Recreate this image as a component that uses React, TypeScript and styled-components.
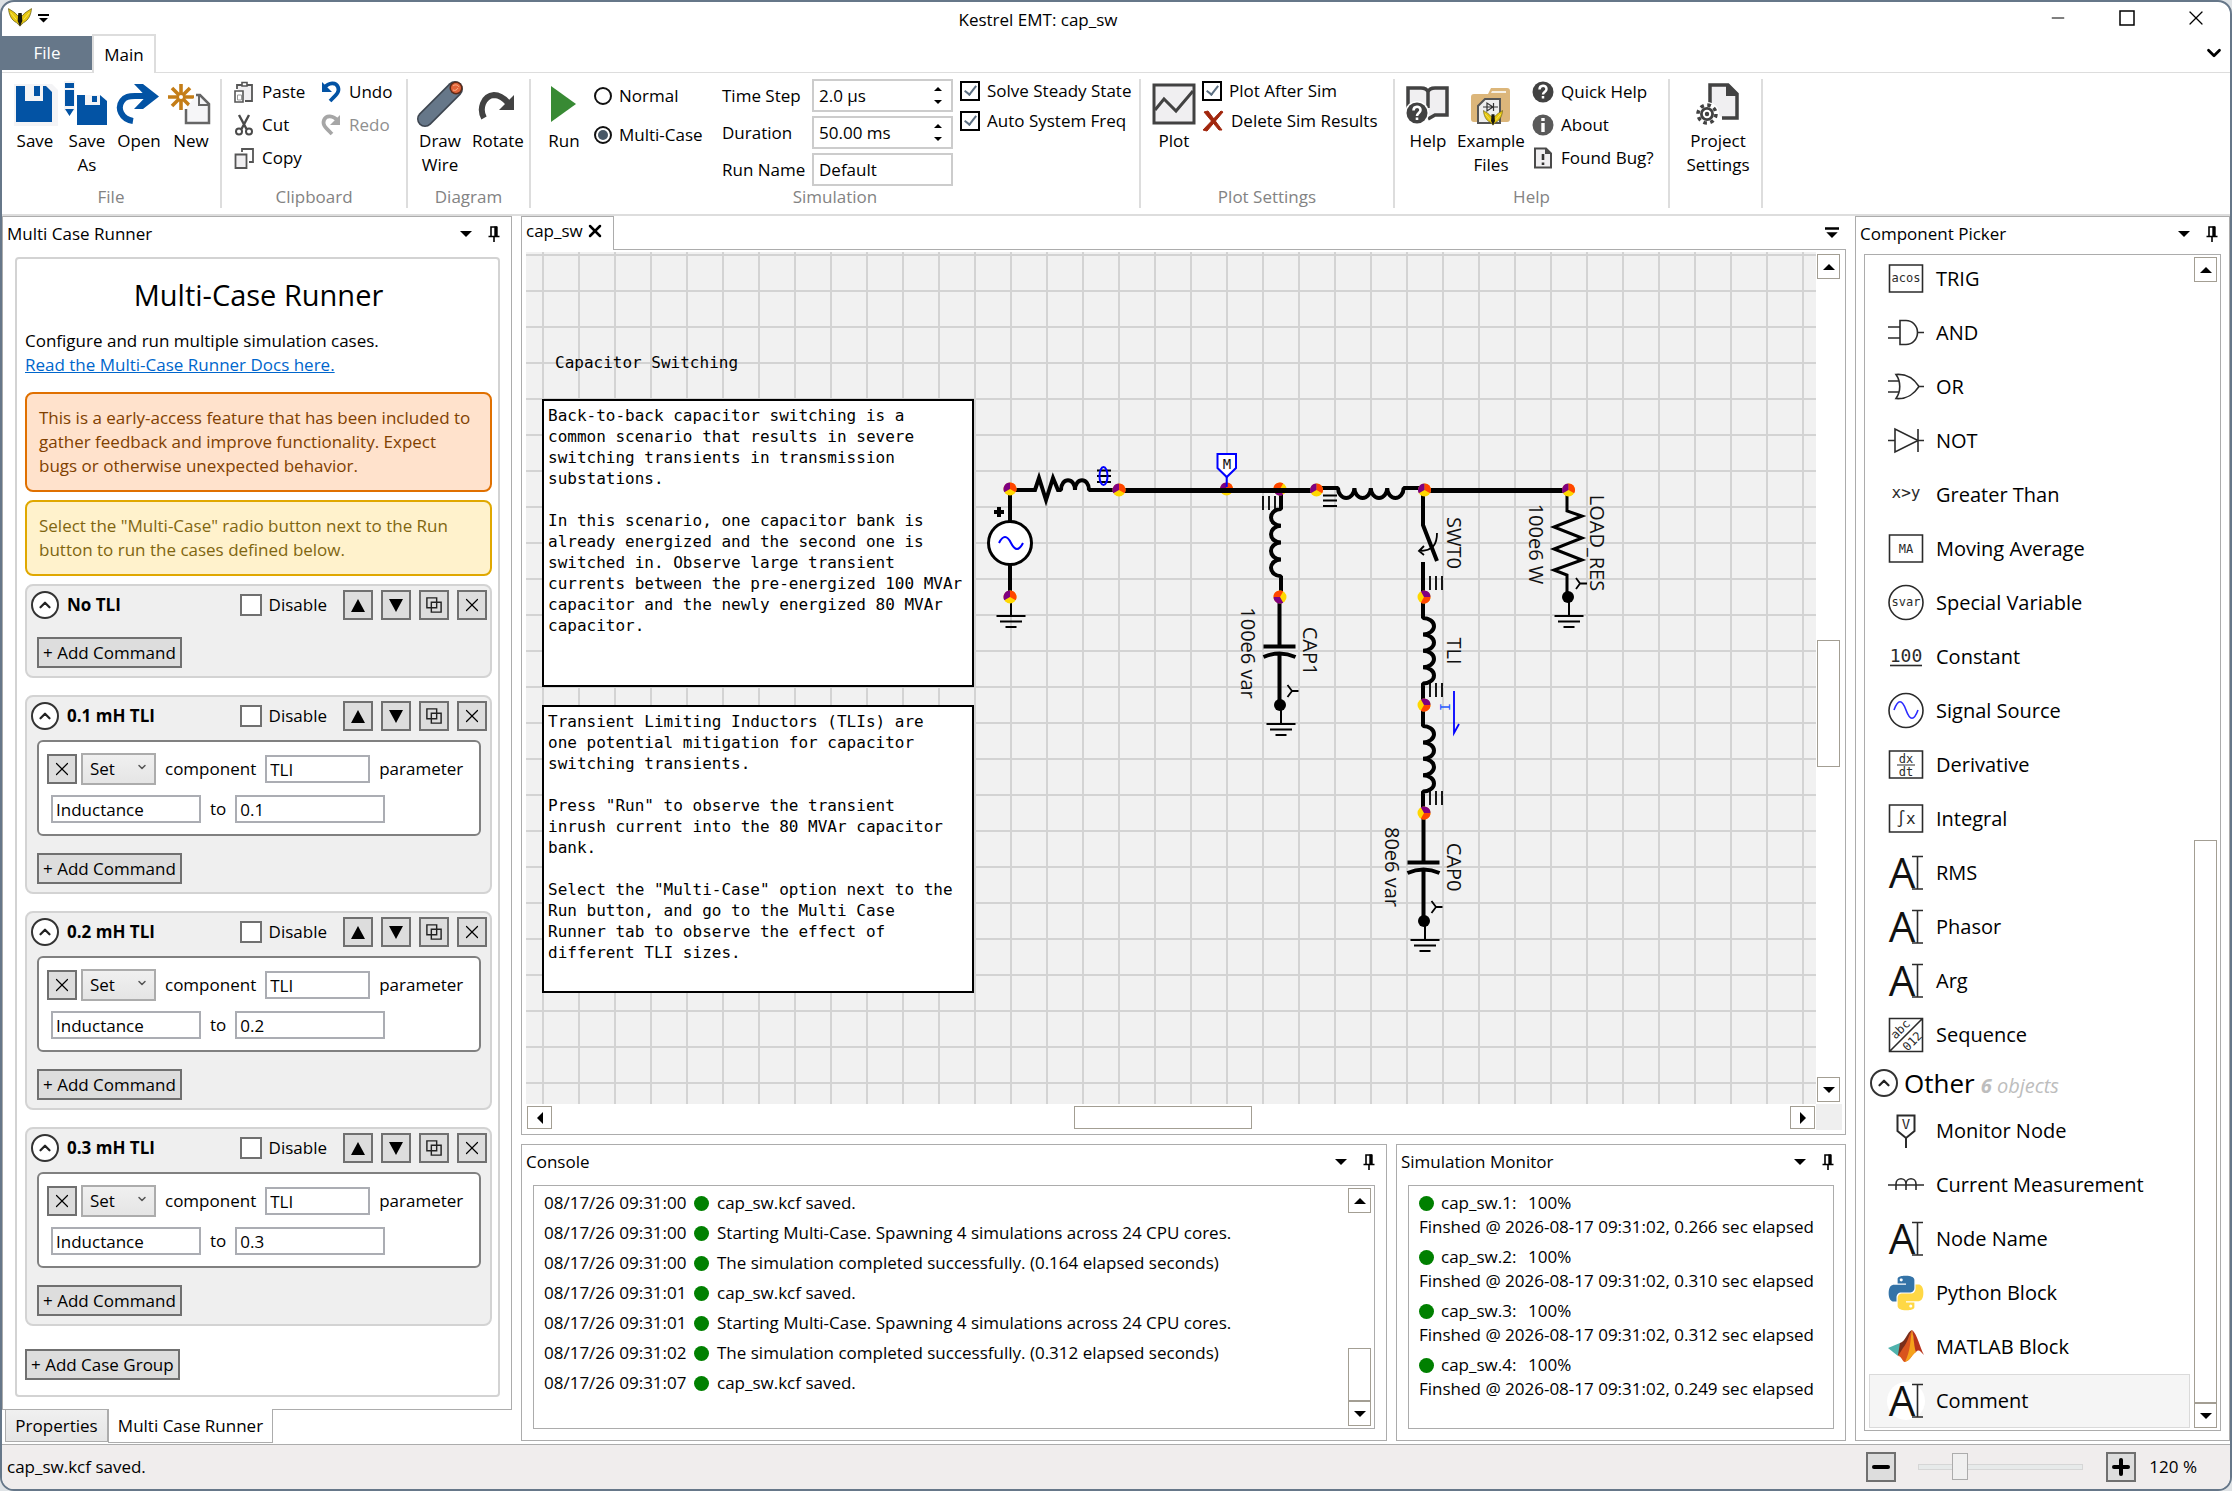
import React from "react";
import styled, { createGlobalStyle, css } from "styled-components";
import { ChevronDown, ChevronUp, Minus, Plus, X } from "lucide-react";

const ui = '"Open Sans", "Noto Sans", sans-serif';
const mono = '"DejaVu Sans Mono", "Liberation Mono", monospace';
const slate = "#667789";
const edge = "#acacac";

const Global = createGlobalStyle`
  * { box-sizing: border-box; }
  body { margin: 0; background: #dfe3e6; font: 17px/24px ${ui}; color: #000; }
  button, input, select { font: inherit; color: inherit; margin: 0; padding: 0; }
  svg { display: block; flex: none; }
  h1, h2, p, ul { margin: 0; padding: 0; font-weight: 400; list-style: none; }
`;

/* ---------- window frame ---------- */

const Window = styled.div`
  height: 100vh;
  display: flex;
  flex-direction: column;
  background: #fff;
  border: 2px solid ${slate};
  border-radius: 14px;
  overflow: hidden;
`;
const TitleBar = styled.header`
  height: 32px;
  display: grid;
  grid-template-columns: 300px 1fr 300px;
  align-items: center;
`;
const QuickAccess = styled.div`
  display: flex;
  align-items: center;
  gap: 5px;
  padding-left: 6px;
`;
const WindowTitle = styled.h1`
  font-size: 17px;
  text-align: center;
  padding: 3px 156px 0 0;
`;
const Caption = styled.div`
  display: flex;
  justify-content: flex-end;
  gap: 23px;
  padding-right: 11px;
`;
const IconButton = styled.button<{ $w?: number }>`
  width: ${(p) => p.$w ?? 24}px;
  height: 24px;
  border: 0;
  background: none;
  display: flex;
  align-items: center;
  justify-content: center;
`;
const TabRow = styled.nav`
  height: 39px;
  display: flex;
  align-items: flex-end;
  border-bottom: 1px solid #ddd;
  padding-right: 4px;
  ${IconButton} {
    align-self: center;
  }
`;
const FileTab = styled.button`
  width: 90px;
  height: 34px;
  margin-bottom: 2px;
  border: 0;
  background: ${slate};
  color: #fff;
`;
const MainTab = styled.button`
  width: 64px;
  height: 39px;
  margin-bottom: -1px;
  border: 2px solid #ddd;
  border-bottom: 0;
  background: #fff;
`;
const Spacer = styled.span`
  flex: 1;
`;

/* ---------- ribbon ---------- */

const Ribbon = styled.div`
  display: flex;
  padding: 6px 0;
  border-bottom: 2px solid #ddd;
`;
const Group = styled.section<{ $w: number; $pad: number }>`
  width: ${(p) => p.$w}px;
  height: 129px;
  display: flex;
  flex-direction: column;
  border-right: 2px solid #ddd;
  & > div {
    flex: 1;
    min-height: 0;
    padding-left: ${(p) => p.$pad}px;
  }
`;
const GroupBody = styled.div`
  display: flex;
  align-items: flex-start;
`;
const GroupName = styled.h2`
  font-size: 17px;
  line-height: 22px;
  color: #838383;
  text-align: center;
`;
const BigButton = styled.button<{ $w?: number }>`
  width: ${(p) => p.$w ?? 52}px;
  display: flex;
  flex-direction: column;
  align-items: center;
  gap: 2px;
  padding-top: 2px;
  border: 0;
  background: none;
`;
const SmallGrid = styled.div<{ $cols?: string }>`
  display: grid;
  grid-template-columns: ${(p) => p.$cols ?? "auto"};
  grid-auto-rows: 26px;
  gap: 7px 0;
  margin-left: 4px;
`;
const SmallButton = styled.button<{ $muted?: boolean }>`
  display: flex;
  align-items: center;
  gap: 7px;
  border: 0;
  background: none;
  white-space: nowrap;
  color: ${(p) => (p.$muted ? "#8f8f8f" : "#000")};
`;
const RadioList = styled.div`
  width: 132px;
  padding: 4px 0 0 4px;
  display: grid;
  grid-auto-rows: 26px;
  row-gap: 13px;
`;
const Choice = styled.label`
  display: flex;
  align-items: center;
  gap: 7px;
  white-space: nowrap;
`;
const Radio = styled.input.attrs({ type: "radio" })`
  appearance: none;
  width: 18px;
  height: 18px;
  border: 2px solid #111;
  border-radius: 50%;
  display: grid;
  place-items: center;
  &:checked::after {
    content: "";
    width: 10px;
    height: 10px;
    border-radius: 50%;
    background: #475766;
  }
`;
const Check = styled.input.attrs({ type: "checkbox" })<{ $soft?: boolean }>`
  appearance: none;
  flex: none;
  width: ${(p) => (p.$soft ? 22 : 20)}px;
  height: ${(p) => (p.$soft ? 22 : 20)}px;
  background: #fff;
  border: 2px solid ${(p) => (p.$soft ? "#707070" : "#000")};
  display: grid;
  place-items: center;
  &:checked::after {
    content: "";
    width: 5px;
    height: 10px;
    margin-bottom: 3px;
    border: solid #5c6f82;
    border-width: 0 2px 2px 0;
    transform: rotate(38deg);
  }
`;
const Fields = styled.div`
  display: grid;
  grid-template-columns: 90px 141px;
  grid-auto-rows: 33px;
  row-gap: 4px;
  align-items: center;
`;
const FieldBox = styled.div`
  height: 33px;
  display: flex;
  align-items: center;
  border: 2px solid #ccc;
  background: #fff;
  padding-left: 5px;
`;
const FieldInput = styled.input`
  flex: 1;
  min-width: 0;
  height: 27px;
  border: 0;
  outline: 0;
  background: none;
`;
const Spinner = styled.div`
  width: 26px;
  display: grid;
  button {
    border: 0;
    background: none;
    height: 13px;
    display: grid;
    place-items: center;
  }
`;
const CheckList = styled.div<{ $left: number }>`
  margin-left: ${(p) => p.$left}px;
  display: grid;
  grid-auto-rows: 23px;
  row-gap: 7px;
`;

/* ---------- docking layout ---------- */

const Workspace = styled.main`
  flex: 1;
  min-height: 0;
  display: grid;
  grid-template-columns: 510px minmax(0, 1fr) 375px;
  grid-template-rows: minmax(0, 1fr);
  column-gap: 9px;
`;
const Column = styled.div<{ $bottom?: number }>`
  min-height: 0;
  display: flex;
  flex-direction: column;
  padding-bottom: ${(p) => p.$bottom ?? 0}px;
`;
const Panel = styled.section`
  flex: 1;
  min-width: 0;
  min-height: 0;
  display: flex;
  flex-direction: column;
  border: 1px solid ${edge};
  background: #fff;
`;
const PanelHead = styled.div`
  height: 36px;
  flex: none;
  display: flex;
  align-items: center;
  padding: 0 3px 2px 4px;
  h2 {
    flex: 1;
    font-size: 17px;
  }
`;
const PanelBody = styled.div<{ $pad: string }>`
  flex: 1;
  min-height: 0;
  display: flex;
  padding: ${(p) => p.$pad};
`;
const Well = styled.div<{ $pad?: string }>`
  flex: 1;
  min-width: 0;
  display: flex;
  overflow: hidden;
  border: 1px solid ${edge};
  padding: ${(p) => p.$pad ?? 0};
`;
const BottomRow = styled.div`
  height: 297px;
  flex: none;
  margin-top: 9px;
  display: grid;
  grid-template-columns: minmax(0, 1fr) 450px;
  column-gap: 9px;
`;

/* ---------- scroll bars ---------- */

const Bar = styled.div<{ $across?: boolean }>`
  flex: none;
  display: flex;
  flex-direction: ${(p) => (p.$across ? "row" : "column")};
  align-items: stretch;
  ${(p) =>
    p.$across
      ? css`
          height: 23px;
          margin: 2px 1px;
        `
      : css`
          width: 23px;
          margin: 2px 1px;
        `}
`;
const BarButton = styled.button`
  width: 23px;
  height: 25px;
  flex: none;
  border: 1px solid #a39e93;
  background: #fff;
  display: grid;
  place-items: center;
`;
const BarButtonWide = styled(BarButton)`
  width: 25px;
  height: 23px;
`;
const Gap = styled.span<{ $n: number }>`
  flex: ${(p) => p.$n} 0 0;
`;
const Thumb = styled.span<{ $n: number }>`
  flex: ${(p) => p.$n} 0 0;
  border: 1px solid #a39e93;
  background: #fff;
`;

/* ---------- multi case runner ---------- */

const Runner = styled.div`
  flex: 1;
  display: flex;
  flex-direction: column;
  border: 2px solid #d3d3d3;
  border-radius: 4px;
  padding: 16px 6px 0 8px;
  overflow: hidden;
`;
const RunnerTitle = styled.h2`
  font-size: 29px;
  line-height: 40px;
  text-align: center;
  margin-bottom: 14px;
`;
const DocsLink = styled.a`
  color: #0066cc;
  align-self: flex-start;
`;
const Notice = styled.p<{ $tone: "orange" | "yellow" }>`
  margin-top: 8px;
  padding: 12px;
  border-radius: 8px;
  border: 2px solid ${(p) => (p.$tone === "orange" ? "#e07000" : "#e0a800")};
  background: ${(p) => (p.$tone === "orange" ? "#ffe2cc" : "#fff2cc")};
  color: ${(p) => (p.$tone === "orange" ? "#804000" : "#7f6610")};
`;
const Intro = styled.div`
  display: flex;
  flex-direction: column;
  margin-bottom: 7px;
`;
const Cases = styled.div`
  display: grid;
  row-gap: 17px;
  margin: 8px 0 23px;
`;
const CaseBox = styled.section`
  border: 2px solid #d3d3d3;
  border-radius: 8px;
  background: #efefef;
  padding: 4px 3px 8px 4px;
`;
const CaseHead = styled.div`
  height: 30px;
  display: flex;
  align-items: center;
  gap: 8px;
  h3 {
    flex: 1;
    margin: 0;
    font-size: 17px;
    font-weight: 700;
  }
  label {
    margin-right: 8px;
  }
`;
const Round = styled.button`
  width: 28px;
  height: 28px;
  flex: none;
  border: 2px solid #333;
  border-radius: 50%;
  background: #fff;
  display: grid;
  place-items: center;
`;
const GrayButton = styled.button<{ $square?: boolean }>`
  height: ${(p) => (p.$square ? 30 : 31)}px;
  width: ${(p) => (p.$square ? "30px" : "auto")};
  flex: none;
  display: flex;
  align-items: center;
  justify-content: center;
  align-self: flex-start;
  padding: ${(p) => (p.$square ? "0" : "0 4px")};
  border: 2px solid #707070;
  background: #ddd;
  white-space: nowrap;
`;
const CaseFoot = styled.div`
  margin: 17px 0 0 6px;
  display: flex;
`;
const Command = styled.div`
  margin: 9px 6px 0 6px;
  padding: 11px 8px;
  border: 2px solid #808080;
  border-radius: 6px;
  background: #fff;
  display: grid;
  row-gap: 10px;
`;
const CommandRow = styled.div<{ $h: number; $indent?: number }>`
  height: ${(p) => p.$h}px;
  padding-left: ${(p) => p.$indent ?? 0}px;
  display: flex;
  align-items: center;
  gap: 9px;
  ${GrayButton} {
    align-self: center;
    margin-right: -5px;
  }
`;
const SelectWrap = styled.span`
  display: grid;
  width: 75px;
  align-items: center;
  & > * {
    grid-area: 1 / 1;
  }
  svg {
    justify-self: end;
    margin: 0 8px 4px 0;
    pointer-events: none;
  }
`;
const Select = styled.select`
  appearance: none;
  width: 75px;
  height: 32px;
  padding-left: 7px;
  border: 2px solid #acacac;
  border-radius: 0;
  background: linear-gradient(#f0f0f0, #e5e5e5);
`;
const TextBox = styled.input<{ $w: number }>`
  width: ${(p) => p.$w}px;
  height: 28px;
  padding: 0 3px;
  border: 2px solid #abadb3;
  background: #fff;
`;
const DockTabs = styled.nav`
  height: 34px;
  flex: none;
  display: flex;
  align-items: flex-start;
  padding-left: 3px;
`;
const DockTab = styled.button<{ $on?: boolean }>`
  width: ${(p) => (p.$on ? 165 : 103)}px;
  height: ${(p) => (p.$on ? 34 : 32)}px;
  border: 1px solid ${edge};
  border-top: 0;
  background: ${(p) => (p.$on ? "#fff" : "linear-gradient(#f0f0f0, #e5e5e5)")};
  margin-top: ${(p) => (p.$on ? -1 : 0)}px;
`;

/* ---------- document ---------- */

const DocTabs = styled.div`
  height: 34px;
  flex: none;
  display: flex;
  align-items: center;
  border-bottom: 1px solid ${edge};
  padding-right: 2px;
`;
const DocTab = styled.div`
  width: 93px;
  height: 34px;
  display: flex;
  align-items: center;
  padding-left: 4px;
  padding-bottom: 4px;
  border: 1px solid ${edge};
  border-bottom: 0;
  background: #fff;
`;
const DocBody = styled.div`
  flex: 1;
  min-height: 0;
  display: grid;
  grid-template: minmax(0, 1fr) 26px / minmax(0, 1fr) 26px;
  padding: 2px 3px 4px 4px;
  border: 1px solid ${edge};
  border-top: 0;
`;
const Corner = styled.span`
  background: #efefef;
`;
const Canvas = styled.div`
  position: relative;
  overflow: hidden;
  background-color: #f1f1f1;
  background-image: linear-gradient(90deg, #d3d3d3 2px, transparent 2px),
    linear-gradient(#d3d3d3 2px, transparent 2px);
  background-size: 36px 36px;
  background-position: 16px 2px;
`;
const Schematic = styled.svg`
  position: absolute;
  left: 0;
  top: 0;
  width: 100%;
  height: 100%;
`;
const Note = styled.p<{ $x: number; $y: number; $boxed?: boolean }>`
  position: absolute;
  left: ${(p) => p.$x}px;
  top: ${(p) => p.$y}px;
  font: 16px/21px ${mono};
  white-space: pre;
  ${(p) =>
    p.$boxed &&
    css`
      width: 432px;
      height: 288px;
      padding: 4px;
      border: 2px solid #000;
      background: #fff;
    `}
`;

/* ---------- console, monitor, picker ---------- */

const Log = styled.ul`
  flex: 1;
  padding: 2px 0 0 10px;
`;
const LogRow = styled.li`
  height: 30px;
  display: grid;
  grid-template-columns: 150px 23px 1fr;
  align-items: center;
`;
const Dot = styled.span`
  width: 15px;
  height: 15px;
  border-radius: 50%;
  background: #008000;
`;
const Runs = styled.ul`
  display: grid;
  align-content: start;
  row-gap: 6px;
  padding: 5px 0 0 10px;
  white-space: nowrap;
`;
const RunHead = styled.div`
  display: flex;
  align-items: center;
  span:nth-child(2) {
    width: 87px;
    margin-left: 7px;
  }
`;
const Items = styled.div`
  flex: 1;
  min-width: 0;
  display: flex;
  flex-direction: column;
  justify-content: flex-end;
  padding: 0 3px 2px 4px;
`;
const Item = styled.button<{ $on?: boolean }>`
  height: 54px;
  flex: none;
  display: flex;
  align-items: center;
  gap: 11px;
  padding-left: 17px;
  font-size: 20px;
  border: 1px solid ${(p) => (p.$on ? "#dadada" : "transparent")};
  background: ${(p) => (p.$on ? "#f5f5f5" : "none")};
  svg {
    border-radius: 50%;
    background: ${(p) => (p.$on ? "#fff" : "none")};
    overflow: visible;
  }
`;
const Section = styled.div`
  height: 42px;
  flex: none;
  display: flex;
  align-items: center;
  gap: 6px;
  padding-left: 1px;
  font-size: 26px;
  em {
    font-size: 20px;
    font-style: italic;
    color: #bdbdbd;
    padding-top: 6px;
  }
`;
const StatusBar = styled.footer`
  height: 45px;
  flex: none;
  display: flex;
  align-items: center;
  border-top: 1px solid ${edge};
  background: #f0eded;
  padding: 0 33px 0 5px;
  ${GrayButton} {
    align-self: center;
  }
`;
const Zoom = styled.input.attrs({ type: "range" })`
  appearance: none;
  width: 165px;
  height: 28px;
  margin: 0 23px 0 22px;
  background: none;
  &::-webkit-slider-runnable-track {
    height: 6px;
    border: 1px solid #d6d6d6;
    background: #e7eaea;
  }
  &::-webkit-slider-thumb {
    appearance: none;
    width: 16px;
    height: 27px;
    margin-top: -12px;
    border: 1px solid #acacac;
    background: #f0f0f0;
  }
`;
const Percent = styled.output`
  margin-left: 13px;
`;

/* ---------- glyphs ---------- */

const Tri = ({ dir, w = 12 }: { dir: "up" | "down" | "left" | "right"; w?: number }) => {
  const d = { up: "M0 9L6 3l6 6z", down: "M0 3l6 6 6-6z", left: "M9 0L3 6l6 6z", right: "M3 0l6 6-6 6z" }[dir];
  return (
    <svg width={w} height={w} viewBox="0 0 12 12">
      <path d={d} />
    </svg>
  );
};
const TallTri = ({ down }: { down?: boolean }) => (
  <svg width="16" height="16" viewBox="0 0 16 16">
    <path d={down ? "M1 2h14L8 15z" : "M1 15h14L8 2z"} />
  </svg>
);
const Pin = () => (
  <svg width="14" height="18" viewBox="0 0 14 18" fill="none" stroke="#000">
    <path d="M4 11V2h6" strokeWidth="1.6" />
    <path d="M9 1.5V11" strokeWidth="3.4" />
    <path d="M1.5 11.5h11M7 12v5" strokeWidth="1.6" />
  </svg>
);
const MenuBars = ({ w = 11 }: { w?: number }) => (
  <svg width={w} height={w} viewBox="0 0 11 11">
    <path d="M0 1h11v2H0zM1 5h9l-4.500 4.500z" />
  </svg>
);
const Bird = ({ x = 0, y = 0, size = 24 }: { x?: number; y?: number; size?: number }) => (
  <svg x={x} y={y} width={size} height={size * 0.8} viewBox="0 0 24 19">
    <path d="M.5.5C1 6 3 12 8.500 14.500L12 18l3.500-3.500C21 12 23 6 23.500.5 20 3 17 4 14.500 7.500H9.500C7 4 4 3 .5.5z" fill="#e6c60f" stroke="#6d6420" strokeWidth=".8" />
    <path d="M2.500 4.500l6 7M21.500 4.500l-6 7" stroke="#f9e85c" />
    <path d="M10.300 5h3.400l.6 8L12 18.500 9.700 13z" fill="#17170e" />
  </svg>
);
const Big = ({ children }: { children: React.ReactNode }) => (
  <svg width="46" height="46" viewBox="0 0 46 46" fill="none">
    {children}
  </svg>
);
const Small = ({ children }: { children: React.ReactNode }) => (
  <svg width="22" height="22" viewBox="0 0 22 22" fill="none">
    {children}
  </svg>
);
const blue = "#0353a4";
const dark = "#424242";

const SaveIcon = () => (
  <Big>
    <path d="M2 3h38l6 6v36H2z" fill="#f4f4f6" />
    <path d="M4 5h30l6 6v30H4z" fill={blue} />
    <path d="M13 5h18v15H13z" fill="#f4f4f6" />
    <path d="M22 5h6v10h-6z" fill={blue} />
  </Big>
);
const SaveAsIcon = () => (
  <Big>
    <path d="M0 0h11v30H0z" fill="#f4f4f6" />
    <path d="M1 2h9v5H1zM1 9h9v16H1zM1 28h9l-4.500 7z" fill={blue} />
    <path d="M13 14h23l7 6v24H13z" fill={blue} />
    <path d="M21 14h15v10H21z" fill="#f4f4f6" />
    <path d="M28 15h5v6h-5z" fill={blue} />
  </Big>
);
const OpenIcon = () => (
  <Big>
    <path d="M17 40C5 38 1 27 6 20c3-4.500 7-5 13-5h16" stroke={blue} strokeWidth="6" />
    <path d="M18 3h9l16 12.500L27 28h-9l12-12.500z" fill={blue} />
  </Big>
);
const NewIcon = () => (
  <Big>
    <path d="M13 3v26M0 16h26M4 7l18 18M22 7L4 25" stroke="#c47d17" strokeWidth="3.600" />
    <circle cx="13" cy="16" r="3" fill="#fff" stroke="#c47d17" strokeWidth="2" />
    <path d="M18 28v14h23V23l-9-9h-4" stroke="#666" strokeWidth="2.500" fill="#f6f6f8" />
    <path d="M31 14v10h10" stroke="#666" strokeWidth="2" />
  </Big>
);
const WireIcon = () => (
  <Big>
    <path d="M8 38L38 8" stroke="#3d4550" strokeWidth="16" strokeLinecap="round" />
    <path d="M8 38L37 9" stroke={slate} strokeWidth="13" strokeLinecap="round" />
    <circle cx="39" cy="7" r="6.500" fill="#5d2a18" />
    <circle cx="39" cy="7" r="5" fill="#e2653a" />
    <path d="M36 5c2-2 5-1 6 1M36 9c2 1 4 0 5-2" stroke="#ffb38c" />
  </Big>
);
const RotateIcon = () => (
  <Big>
    <path d="M9 37C4 28 8 15 19 14c7 0 11 4 15 9" stroke={dark} strokeWidth="6" />
    <path d="M39 14v15H24z" fill={dark} />
  </Big>
);
const RunIcon = () => (
  <Big>
    <path d="M10 5l25 18-25 18z" fill="#388a34" />
  </Big>
);
const PlotIcon = () => (
  <Big>
    <path d="M3 4h40v38H3z" fill="#f0eff1" stroke={dark} strokeWidth="3" />
    <path d="M4 29l9-11 12 12 17-20" stroke={dark} strokeWidth="3" />
  </Big>
);
const HelpIcon = () => (
  <Big>
    <path d="M3 28V7h13c4 0 6 1 7 4v16M23 11c1-3 3-4 7-4h12v27H30l-7 4" stroke={dark} strokeWidth="3.500" fill="#f0eff1" />
    <circle cx="12" cy="32" r="12" fill="#fff" />
    <circle cx="12" cy="32" r="10.500" fill={dark} />
    <path d="M8.500 29.500c0-5 7-5 7-.5 0 3-3.500 3-3.500 6M12 36.500v2.500" stroke="#fff" strokeWidth="2.600" />
  </Big>
);
const FolderIcon = () => (
  <Big>
    <path d="M3 16c0-2 1-3 3-3h14l3-6h16c2 0 3 1 3 3v28c0 2-1 3-3 3H6c-2 0-3-1-3-3z" fill="#dcb67a" />
    <path d="M24 10h14v2H23z" fill="#f6f0e4" />
    <path d="M17 18h15v24H10V25z" fill="#eee" stroke="#555" strokeWidth="2" />
    <path d="M15 26h15M19 22v8l6-4zM25.500 22v8" stroke="#333" strokeWidth="1.200" />
    <Bird x={15} y={29} size={20} />
  </Big>
);
const ProjectIcon = () => (
  <Big>
    <path d="M15 24V4h18l9 9v24H27" stroke={dark} strokeWidth="3.500" fill="#f0eff1" />
    <path d="M31 3l12 12H31z" fill={dark} />
    <circle cx="12" cy="33" r="12" fill="#fff" />
    <circle cx="12" cy="33" r="7" fill={dark} />
    <circle cx="12" cy="33" r="9" stroke={dark} strokeWidth="3.500" strokeDasharray="3.600 3.470" />
    <circle cx="12" cy="33" r="3.200" fill={dark} stroke="#fff" strokeWidth="2" />
  </Big>
);
const PasteIcon = () => (
  <Small>
    <path d="M4 8V4h15v16h-7" stroke="#555" strokeWidth="1.800" fill="#f0eff1" />
    <path d="M9 5V1.500h5V5z" stroke="#555" strokeWidth="1.600" fill="#fff" />
    <path d="M2 10h8v11H2z" stroke="#555" strokeWidth="1.600" fill="#fff" />
    <path d="M4.500 14h4v5h-4z" stroke="#999" />
  </Small>
);
const CutIcon = () => (
  <Small>
    <path d="M6 1l7.500 14M16 1L8.500 15" stroke="#4a4a4a" strokeWidth="2.400" />
    <circle cx="6" cy="17.500" r="3" stroke="#4a4a4a" strokeWidth="2" />
    <circle cx="16" cy="17.500" r="3" stroke="#4a4a4a" strokeWidth="2" />
  </Small>
);
const CopyIcon = () => (
  <Small>
    <path d="M9 5V2h11v13h-4" stroke="#555" strokeWidth="1.800" />
    <path d="M2.500 7.500h11V21h-11z" stroke="#555" strokeWidth="1.800" fill="#f0eff1" />
  </Small>
);
const UndoIcon = ({ flip, color }: { flip?: boolean; color: string }) => (
  <Small>
    <g transform={flip ? "translate(22 0) scale(-1 1)" : undefined}>
      <path d="M4 7c5-6 12-6 14-1 2 5-2 8-8 14" stroke={color} strokeWidth="3.800" />
      <path d="M2 1v10h10z" fill={color} />
    </g>
  </Small>
);
const DeleteIcon = () => (
  <Small>
    <path d="M2 2l4-1 14 19-3 0z" fill="#a1260d" stroke="#a1260d" />
    <path d="M19 1l2 1L5 21l-4-1z" fill="#a1260d" stroke="#a1260d" />
  </Small>
);
const QuickIcon = () => (
  <Small>
    <circle cx="11" cy="11" r="10.500" fill={dark} />
    <path d="M7.500 8.500c0-5 7-5 7-.5 0 3-3.500 3-3.500 5.500M11 15v2.500" stroke="#fff" strokeWidth="2.500" />
  </Small>
);
const AboutIcon = () => (
  <Small>
    <circle cx="11" cy="11" r="10.500" fill="#5a5a5a" />
    <path d="M11 4v3M11 9v9" stroke="#fff" strokeWidth="3.400" />
  </Small>
);
const BugIcon = () => (
  <Small>
    <path d="M3 1.500h11l5 5v14H3z" stroke="#4a4a4a" strokeWidth="2" fill="#f0eff1" />
    <path d="M13 1l6 6h-6z" fill="#4a4a4a" />
    <path d="M11 7v6M11 15.500V18" stroke="#333" strokeWidth="2.600" />
  </Small>
);
const DupeIcon = () => (
  <svg width="16" height="16" viewBox="0 0 18 18" fill="none" stroke="#222" strokeWidth="1.600">
    <path d="M1 1h11v11H1zM6 6h11v11H6z" />
  </svg>
);

/* ---------- picker icons ---------- */

const Pic = ({ children }: { children: React.ReactNode }) => (
  <svg width="38" height="38" viewBox="0 0 38 38" fill="none" stroke="#2b2b2b" strokeWidth="1.600">
    {children}
  </svg>
);
const Word = ({ x = 19, y, size, children }: { x?: number; y: number; size: number; children: string }) => (
  <text x={x} y={y} fontFamily={mono} fontSize={size} textAnchor="middle" fill="#2b2b2b" stroke="none">
    {children}
  </text>
);
const Frame = () => <path d="M2.500 5h33v27h-33z" />;
const CursorA = () => (
  <Pic>
    <text x="15" y="34" fontFamily={ui} fontSize="42" fontWeight="500" textAnchor="middle" fill="#111" stroke="none">A</text>
    <path d="M25 2.500h11M25 35h11M30.500 2.500V35" />
  </Pic>
);

const pythonTop =
  "M14.25.18l.9.2.73.26.59.3.45.32.34.34.25.34.16.33.1.3.04.26.02.2-.01.13V8.5l-.05.63-.13.55-.21.46-.26.38-.3.31-.33.25-.35.19-.35.14-.33.1-.3.07-.26.04-.21.02H8.77l-.69.05-.59.14-.5.22-.41.27-.33.32-.27.35-.2.36-.15.37-.1.35-.07.32-.04.27-.02.21v3.06H3.17l-.21-.03-.28-.07-.32-.12-.35-.18-.36-.26-.36-.36-.35-.46-.32-.59-.28-.73-.21-.88-.14-1.05-.05-1.23.06-1.22.16-1.04.24-.87.32-.71.36-.57.4-.44.42-.33.42-.24.4-.16.36-.1.32-.05.24-.01h.16l.06.01h8.16v-.83H6.18l-.01-2.75-.02-.37.05-.34.11-.31.17-.28.25-.26.31-.23.38-.2.44-.18.51-.15.58-.12.64-.1.71-.06.77-.04.84-.02 1.27.05zm-6.3 1.98l-.23.33-.08.41.08.41.23.34.33.22.41.09.41-.09.33-.22.23-.34.08-.41-.08-.41-.23-.33-.33-.22-.41-.09-.41.09z";
const pythonBottom =
  "M21.04 6.11l.28.06.32.12.35.18.36.27.36.35.35.47.32.59.28.73.21.88.14 1.04.05 1.23-.06 1.23-.16 1.04-.24.86-.32.71-.36.57-.4.45-.42.33-.42.24-.4.16-.36.09-.32.05-.24.02-.16-.01h-8.22v.82h5.84l.01 2.76.02.36-.05.34-.11.31-.17.29-.25.25-.31.24-.38.2-.44.17-.51.15-.58.13-.64.09-.71.07-.77.04-.84.01-1.27-.04-1.07-.14-.9-.2-.73-.25-.59-.3-.45-.33-.34-.34-.25-.34-.16-.33-.1-.3-.04-.25-.02-.2.01-.13v-5.34l.05-.64.13-.54.21-.46.26-.38.3-.32.33-.24.35-.2.35-.14.33-.1.3-.06.26-.04.21-.02.13-.01h5.84l.69-.05.59-.14.5-.21.41-.28.33-.32.27-.35.2-.36.15-.36.1-.35.07-.32.04-.28.02-.21V6.07h2.09l.14.01zm-6.47 14.25l-.23.33-.08.41.08.41.23.33.33.23.41.08.41-.08.33-.23.23-.33.08-.41-.08-.41-.23-.33-.33-.23-.41-.08-.41.08z";

const blocks: [string, React.ReactNode][] = [
  ["TRIG", <Pic><Frame /><Word y={22} size={12}>acos</Word></Pic>],
  ["AND", <Pic><path d="M13 6.500h6a11.500 12 0 010 24h-6zM1 13h12M1 24h12M30.500 18.500H37" /></Pic>],
  ["OR", <Pic><path d="M9 6.500c13-1 19 6 23 12-4 6-10 13-23 12 5-7 5-17 0-24zM1 13h11M1 24h11M32 18.500h5" /></Pic>],
  ["NOT", <Pic><path d="M8 7v23l23-11.500zM31 7v23M1 18.500h7M31 18.500h6" /></Pic>],
  ["Greater Than", <Pic><Word y={22} size={16}>{"x>y"}</Word></Pic>],
  ["Moving Average", <Pic><Frame /><Word y={23} size={12}>MA</Word></Pic>],
  ["Special Variable", <Pic><circle cx="19" cy="18.500" r="17" /><Word y={22} size={12}>svar</Word></Pic>],
  ["Constant", <Pic><Word y={24} size={18}>100</Word><path d="M3 27.500h32" /></Pic>],
  ["Signal Source", <Pic><circle cx="19" cy="18.500" r="17" /><path d="M7 18c4-11 8-11 12 0s8 11 12 0" stroke="#2a2aff" /></Pic>],
  ["Derivative", <Pic><Frame /><Word y={17} size={12}>dx</Word><Word y={30} size={12}>dt</Word><path d="M10 19h18" strokeWidth="1" /></Pic>],
  ["Integral", <Pic><Frame /><Word y={24} size={16}>∫x</Word></Pic>],
  ["RMS", <CursorA />],
  ["Phasor", <CursorA />],
  ["Arg", <CursorA />],
  [
    "Sequence",
    <Pic>
      <path d="M2.500 2.500h33v33h-33zM2.500 35.500l33-33" />
      <g transform="rotate(-45 19 19)">
        <Word y={15} size={12}>abc</Word>
        <Word y={32} size={12}>012</Word>
      </g>
    </Pic>,
  ],
];
const others: [string, React.ReactNode][] = [
  ["Monitor Node", <Pic><path d="M10.500 3.500h17V19L19 26l-8.500-7zM19 26v10" strokeWidth="2" /><Word y={17} size={14}>V</Word></Pic>],
  ["Current Measurement", <Pic><path d="M1 19h36M9 24v-6c0-7 10-7 10 0v6M19 18c0-7 10-7 10 0v6" /></Pic>],
  ["Node Name", <CursorA />],
  [
    "Python Block",
    <svg width="38" height="38" viewBox="-1.200 -1 26.400 26">
      <path d={pythonTop} fill="#3473a7" />
      <path d={pythonBottom} fill="#ffd845" />
    </svg>,
  ],
  [
    "MATLAB Block",
    <svg width="38" height="38" viewBox="0 0 38 38">
      <path d="M1 20l12-5 5 5-7 8z" fill="#4fb3ad" />
      <path d="M13 15c6-2 7-11 12-13l-6 18-6 8-2-1z" fill="#7a2e1b" />
      <path d="M25 2c-3 4-4 12-9 18l-5 8c4 0 4 6 7 6 6-2 7-8 11-10z" fill="#d9541e" />
      <path d="M25 2c-2 10-1 20-7 32 6-2 7-8 11-10z" fill="#f5a21b" />
      <path d="M25 2c5 3 8 18 12 25-4-4-5-6-8-3-2-5-2-14-4-22z" fill="#b8341b" />
    </svg>,
  ],
  ["Comment", <CursorA />],
];

/* ---------- schematic ---------- */

const Node = ({ x, y, r = 0 }: { x: number; y: number; r?: number }) => (
  <g transform={`translate(${x} ${y}) rotate(${r})`} stroke="none">
    <circle r="6.500" fill="#ffd700" />
    <path d="M0 0V-6.500A6.500 6.500 0 015.630 3.250z" fill="#ff4500" />
    <path d="M0 0L-5.630 3.250A6.500 6.500 0 010-6.500z" fill="#800080" />
  </g>
);
const Ground = ({ x, y }: { x: number; y: number }) => (
  <path d={`M${x} ${y - 17}v17M${x - 14.5} ${y}h29M${x - 11} ${y + 5.5}h22M${x - 5.5} ${y + 11}h11`} strokeWidth="2" />
);
const Tag = ({ x, y, children }: { x: number; y: number; children: string }) => (
  <text transform={`translate(${x} ${y}) rotate(90)`} fontFamily={ui} fontSize="20" fill="#111" stroke="none" textAnchor="middle">
    {children}
  </text>
);
const Bars = ({ x, y }: { x: number; y: number }) => <path d={`M${x} ${y}v14M${x + 6} ${y}v14M${x + 12} ${y}v14`} strokeWidth="1.800" />;
const Coil = ({ y }: { y: number }) => (
  <>
    <path d={`M1423 ${y}v21${"a11 8.200 0 010 16.400".repeat(4)}V${y + 108}`} strokeLinejoin="bevel" />
    <Bars x={1430} y={y + 86} />
  </>
);
const Capacitor = ({ x, y }: { x: number; y: number }) => (
  <>
    <path d={`M${x} ${y}v49M${x - 16} ${y + 49.5}h32M${x - 16} ${y + 60}q16-7 32 0M${x} ${y + 57}v51`} />
    <path d={`M${x + 8} ${y + 88}l4.500 6-4.500 6M${x + 12.5} ${y + 94}h6.500`} strokeWidth="1.800" />
    <circle cx={x + 0.5} cy={y + 108} r="6" fill="#000" stroke="none" />
    <Ground x={x + 1.5} y={y + 127} />
  </>
);

const Circuit = () => (
  <Schematic aria-label="Capacitor switching circuit">
    <g transform="translate(-526 -252)" fill="none" stroke="#000" strokeWidth="4" strokeMiterlimit="12">
      <path d="M1010 489v34M1010 563v34" />
      <path d="M999 507v10M994 512h10" />
      <circle cx="1010" cy="543" r="21.500" fill="#fff" strokeWidth="3" />
      <path d="M999 543c4-8 8-8 12 0s8 8 12 0" stroke="#00f" strokeWidth="2" />
      <path d="M1010 490h25l4-12 7 22 7-22 5 12h3" />
      <path d="M1058 490h3c0-13 14-13 14 0 0-13 14-13 14 0h30" strokeLinejoin="bevel" />
      <path d="M1097 470.500h14M1097 476h14M1097 482h14" strokeWidth="2" />
      <ellipse cx="1103.500" cy="476" rx="4" ry="9" stroke="#00f" strokeWidth="2" />
      <Ground x={1011} y={616} />
      <Node x={1010} y={489} />
      <Node x={1010} y={597} />

      <path d={`M1281 492v17${"a10 8.400 0 000 16.800".repeat(4)}V597`} strokeLinejoin="bevel" />
      <Node x={1226.5} y={489} />
      <Node x={1280} y={489} r={-90} />
      <path d="M1119 490.500h197M1424 490.500h145" strokeWidth="5" />
      <path d="M1217.500 454h18.500v14l-9.250 9-9.250-9z" fill="#fff" stroke="#00f" strokeWidth="2" />
      <path d="M1226.700 477v10" stroke="#00f" strokeWidth="2" />
      <text x="1227" y="469" fontFamily={mono} fontSize="14" textAnchor="middle" fill="#111" stroke="none">M</text>

      <Bars x={1263} y={496} />
      <Capacitor x={1279.5} y={597} />
      <Node x={1280} y={597} r={-90} />

      <path d={`M1316 488h22${"a8.200 10 0 0016.400 0".repeat(4)}H1424`} strokeLinejoin="bevel" />
      <path d="M1323 495.500h14M1323 500.500h14M1323 506h14" strokeWidth="1.800" />

      <path d="M1423 490v35l14 36M1423 562v35" />
      <path d="M1437 533c0 10-3 18-18 18M1424 546l-5 5 5 4" strokeWidth="1.800" />
      <Bars x={1430} y={576} />
      <Coil y={597} />
      <Coil y={705} />
      <Capacitor x={1423.5} y={813} />
      <Node x={1424} y={597} r={90} />
      <Node x={1424} y={705} r={90} />
      <Node x={1424} y={813} r={90} />
      <path d="M1454 691v42l5-9" stroke="#00f" strokeWidth="1.800" />
      <text transform="translate(1440 707) rotate(90)" fontFamily={mono} fontSize="14" fill="#2a5cff" stroke="none" textAnchor="middle">I</text>

      <path d="M1567 490v21l15 5-28 11 28 11-28 11 28 11-28 10 13 5v22" strokeWidth="3" />
      <path d="M1576 578l4 5.500-4 5.500M1580 583.500h7" strokeWidth="1.800" />
      <circle cx="1568" cy="597" r="6" fill="#000" stroke="none" />
      <Ground x={1569} y={616} />
      <Node x={1119} y={490} />
      <Node x={1316.5} y={490} />
      <Node x={1424.5} y={490} />
      <Node x={1568.5} y={490} />

      <Tag x={1241} y={653}>100e6 var</Tag>
      <Tag x={1303} y={651}>CAP1</Tag>
      <Tag x={1447} y={543}>SWT0</Tag>
      <Tag x={1447} y={651}>TLI</Tag>
      <Tag x={1590} y={543}>LOAD_RES</Tag>
      <Tag x={1529} y={544}>100e6 W</Tag>
      <Tag x={1385} y={867}>80e6 var</Tag>
      <Tag x={1447} y={867}>CAP0</Tag>
    </g>
  </Schematic>
);

/* ---------- composed parts ---------- */

const Scroll = ({ label, before, thumb, after }: { label: string; before: number; thumb: number; after: number }) => (
  <Bar>
    <BarButton aria-label={`${label} up`}><Tri dir="up" /></BarButton>
    <Gap $n={before} />
    <Thumb $n={thumb} />
    {after > 0 && <Gap $n={after} />}
    <BarButton aria-label={`${label} down`}><Tri dir="down" /></BarButton>
  </Bar>
);
const Head = ({ title }: { title: string }) => (
  <PanelHead>
    <h2>{title}</h2>
    <IconButton $w={28} aria-label={`${title} menu`}><Tri dir="down" /></IconButton>
    <IconButton $w={28} aria-label={`Pin ${title}`}><Pin /></IconButton>
  </PanelHead>
);
const SpinField = ({ id, value }: { id: string; value: string }) => (
  <FieldBox>
    <FieldInput id={id} defaultValue={value} />
    <Spinner>
      <button aria-label="Increase"><Tri dir="up" w={8} /></button>
      <button aria-label="Decrease"><Tri dir="down" w={8} /></button>
    </Spinner>
  </FieldBox>
);
const Case = ({ name, value }: { name: string; value?: string }) => (
  <CaseBox>
    <CaseHead>
      <Round aria-label={`Collapse ${name}`}><ChevronUp size={18} strokeWidth={3} color="#222" /></Round>
      <h3>{name}</h3>
      <Choice><Check $soft />Disable</Choice>
      <GrayButton $square aria-label="Move up"><TallTri /></GrayButton>
      <GrayButton $square aria-label="Move down"><TallTri down /></GrayButton>
      <GrayButton $square aria-label="Duplicate"><DupeIcon /></GrayButton>
      <GrayButton $square aria-label="Delete case"><X size={22} strokeWidth={1.3} /></GrayButton>
    </CaseHead>
    {value && (
      <Command>
        <CommandRow $h={32}>
          <GrayButton $square aria-label="Remove command"><X size={22} strokeWidth={1.3} /></GrayButton>
          <SelectWrap>
            <Select aria-label="Action" defaultValue="Set"><option>Set</option></Select>
            <ChevronDown size={12} strokeWidth={3} color="#555" />
          </SelectWrap>
          <label htmlFor={`c${value}`}>component</label>
          <TextBox id={`c${value}`} $w={105} defaultValue="TLI" />
          <label htmlFor={`p${value}`}>parameter</label>
        </CommandRow>
        <CommandRow $h={28} $indent={4}>
          <TextBox id={`p${value}`} $w={150} defaultValue="Inductance" />
          <label htmlFor={`v${value}`}>to</label>
          <TextBox id={`v${value}`} $w={150} defaultValue={value} />
        </CommandRow>
      </Command>
    )}
    <CaseFoot><GrayButton>+ Add Command</GrayButton></CaseFoot>
  </CaseBox>
);

const saved = "cap_sw.kcf saved.";
const spawning = "Starting Multi-Case. Spawning 4 simulations across 24 CPU cores.";
const log: [string, string][] = [
  ["09:31:00", saved],
  ["09:31:00", spawning],
  ["09:31:00", "The simulation completed successfully. (0.164 elapsed seconds)"],
  ["09:31:01", saved],
  ["09:31:01", spawning],
  ["09:31:02", "The simulation completed successfully. (0.312 elapsed seconds)"],
  ["09:31:07", saved],
];

const noteOne = `Back-to-back capacitor switching is a
common scenario that results in severe
switching transients in transmission
substations.

In this scenario, one capacitor bank is
already energized and the second one is
switched in. Observe large transient
currents between the pre-energized 100 MVAr
capacitor and the newly energized 80 MVAr
capacitor.`;
const noteTwo = `Transient Limiting Inductors (TLIs) are
one potential mitigation for capacitor
switching transients.

Press "Run" to observe the transient
inrush current into the 80 MVAr capacitor
bank.

Select the "Multi-Case" option next to the
Run button, and go to the Multi Case
Runner tab to observe the effect of
different TLI sizes.`;

export default function App() {
  return (
    <Window>
      <Global />
      <TitleBar>
        <QuickAccess>
          <Bird />
          <IconButton $w={12} aria-label="Customize toolbar"><MenuBars /></IconButton>
        </QuickAccess>
        <WindowTitle>Kestrel EMT: cap_sw</WindowTitle>
        <Caption>
          <IconButton $w={46} aria-label="Minimize"><Minus size={20} strokeWidth={1.2} /></IconButton>
          <IconButton $w={46} aria-label="Maximize">
            <svg width="16" height="16" viewBox="0 0 16 16"><path d="M1 1h14v14H1z" fill="none" stroke="#000" strokeWidth="1.500" /></svg>
          </IconButton>
          <IconButton $w={46} aria-label="Close"><X size={24} strokeWidth={1.2} /></IconButton>
        </Caption>
      </TitleBar>
      <TabRow>
        <FileTab>File</FileTab>
        <MainTab>Main</MainTab>
        <Spacer />
        <IconButton aria-label="Collapse ribbon"><ChevronDown size={22} strokeWidth={3} /></IconButton>
      </TabRow>

      <Ribbon>
        <Group $w={220} $pad={7}>
          <GroupBody>
            <BigButton><SaveIcon />Save</BigButton>
            <BigButton><SaveAsIcon />Save As</BigButton>
            <BigButton><OpenIcon />Open</BigButton>
            <BigButton><NewIcon />New</BigButton>
          </GroupBody>
          <GroupName>File</GroupName>
        </Group>
        <Group $w={186} $pad={7}>
          <GroupBody>
            <SmallGrid $cols="87px 84px">
              <SmallButton><PasteIcon />Paste</SmallButton>
              <SmallButton><UndoIcon color={blue} />Undo</SmallButton>
              <SmallButton><CutIcon />Cut</SmallButton>
              <SmallButton $muted><UndoIcon color="#a6a6a6" flip />Redo</SmallButton>
              <SmallButton><CopyIcon />Copy</SmallButton>
            </SmallGrid>
          </GroupBody>
          <GroupName>Clipboard</GroupName>
        </Group>
        <Group $w={123} $pad={3}>
          <GroupBody>
            <BigButton $w={58}><WireIcon />Draw<br />Wire</BigButton>
            <BigButton $w={58}><RotateIcon />Rotate</BigButton>
          </GroupBody>
          <GroupName>Diagram</GroupName>
        </Group>
        <Group $w={610} $pad={7}>
          <GroupBody>
            <BigButton><RunIcon />Run</BigButton>
            <RadioList>
              <Choice><Radio name="mode" />Normal</Choice>
              <Choice><Radio name="mode" defaultChecked />Multi-Case</Choice>
            </RadioList>
            <Fields>
              <label htmlFor="step">Time Step</label>
              <SpinField id="step" value="2.0 µs" />
              <label htmlFor="dur">Duration</label>
              <SpinField id="dur" value="50.00 ms" />
              <label htmlFor="run">Run Name</label>
              <FieldBox><FieldInput id="run" defaultValue="Default" /></FieldBox>
            </Fields>
            <CheckList $left={7}>
              <Choice><Check defaultChecked />Solve Steady State</Choice>
              <Choice><Check defaultChecked />Auto System Freq</Choice>
            </CheckList>
          </GroupBody>
          <GroupName>Simulation</GroupName>
        </Group>
        <Group $w={254} $pad={7}>
          <GroupBody>
            <BigButton><PlotIcon />Plot</BigButton>
            <CheckList $left={2}>
              <Choice><Check defaultChecked />Plot After Sim</Choice>
              <SmallButton><DeleteIcon />Delete Sim Results</SmallButton>
            </CheckList>
          </GroupBody>
          <GroupName>Plot Settings</GroupName>
        </Group>
        <Group $w={275} $pad={7}>
          <GroupBody>
            <BigButton><HelpIcon />Help</BigButton>
            <BigButton $w={74}><FolderIcon />Example Files</BigButton>
            <SmallGrid>
              <SmallButton><QuickIcon />Quick Help</SmallButton>
              <SmallButton><AboutIcon />About</SmallButton>
              <SmallButton><BugIcon />Found Bug?</SmallButton>
            </SmallGrid>
          </GroupBody>
          <GroupName>Help</GroupName>
        </Group>
        <Group $w={93} $pad={7}>
          <GroupBody>
            <BigButton $w={82}><ProjectIcon />Project Settings</BigButton>
          </GroupBody>
        </Group>
      </Ribbon>

      <Workspace>
        <Column>
          <Panel>
            <Head title="Multi Case Runner" />
            <PanelBody $pad="4px 11px 12px 12px">
              <Runner>
                <RunnerTitle>Multi-Case Runner</RunnerTitle>
                <Intro>
                  <p>Configure and run multiple simulation cases.</p>
                  <DocsLink href="#docs">Read the Multi-Case Runner Docs here.</DocsLink>
                </Intro>
                <Notice $tone="orange">
                  This is a early-access feature that has been included to gather feedback and improve functionality. Expect bugs or otherwise unexpected behavior.
                </Notice>
                <Notice $tone="yellow">Select the "Multi-Case" radio button next to the Run button to run the cases defined below.</Notice>
                <Cases>
                  <Case name="No TLI" />
                  <Case name="0.1 mH TLI" value="0.1" />
                  <Case name="0.2 mH TLI" value="0.2" />
                  <Case name="0.3 mH TLI" value="0.3" />
                </Cases>
                <GrayButton>+ Add Case Group</GrayButton>
              </Runner>
            </PanelBody>
          </Panel>
          <DockTabs>
            <DockTab>Properties</DockTab>
            <DockTab $on>Multi Case Runner</DockTab>
          </DockTabs>
        </Column>

        <Column $bottom={3}>
          <DocTabs>
            <DocTab>
              cap_sw
              <IconButton aria-label="Close cap_sw"><X size={20} strokeWidth={3} /></IconButton>
            </DocTab>
            <Spacer />
            <IconButton aria-label="Open documents"><MenuBars w={14} /></IconButton>
          </DocTabs>
          <DocBody>
            <Canvas>
              <Circuit />
              <Note $x={29} $y={100}>Capacitor Switching</Note>
              <Note $boxed $x={16} $y={147}>{noteOne}</Note>
              <Note $boxed $x={16} $y={453}>{noteTwo}</Note>
            </Canvas>
            <Scroll label="Scroll diagram" before={362} thumb={126} after={311} />
            <Bar $across>
              <BarButtonWide aria-label="Scroll diagram left"><Tri dir="left" /></BarButtonWide>
              <Gap $n={522} />
              <Thumb $n={177} />
              <Gap $n={538} />
              <BarButtonWide aria-label="Scroll diagram right"><Tri dir="right" /></BarButtonWide>
            </Bar>
            <Corner />
          </DocBody>

          <BottomRow>
            <Panel>
              <Head title="Console" />
              <PanelBody $pad="4px 11px 11px">
                <Well $pad="0 2px 0 0">
                  <Log>
                    {log.map(([time, text], i) => (
                      <LogRow key={i}>
                        <time>08/17/26 {time}</time>
                        <Dot />
                        <span>{text}</span>
                      </LogRow>
                    ))}
                  </Log>
                  <Scroll label="Scroll console" before={134} thumb={50} after={0} />
                </Well>
              </PanelBody>
            </Panel>
            <Panel>
              <Head title="Simulation Monitor" />
              <PanelBody $pad="4px 11px 11px">
                <Well>
                  <Runs>
                    {["0.266", "0.310", "0.312", "0.249"].map((sec, i) => (
                      <li key={sec}>
                        <RunHead><Dot /><span>cap_sw.{i + 1}:</span><span>100%</span></RunHead>
                        Finshed @ 2026-08-17 09:31:02, {sec} sec elapsed
                      </li>
                    ))}
                  </Runs>
                </Well>
              </PanelBody>
            </Panel>
          </BottomRow>
        </Column>

        <Column $bottom={3}>
          <Panel>
            <Head title="Component Picker" />
            <PanelBody $pad="1px 8px 9px">
              <Well $pad="0 2px 0 0">
                <Items>
                  {blocks.map(([name, icon]) => (
                    <Item key={name}>{icon}{name}</Item>
                  ))}
                  <Section>
                    <Round aria-label="Collapse Other"><ChevronUp size={18} strokeWidth={3} color="#222" /></Round>
                    Other <em><b>6</b> objects</em>
                  </Section>
                  {others.map(([name, icon]) => (
                    <Item key={name} $on={name === "Comment"}>{icon}{name}</Item>
                  ))}
                </Items>
                <Scroll label="Scroll components" before={557} thumb={561} after={0} />
              </Well>
            </PanelBody>
          </Panel>
        </Column>
      </Workspace>

      <StatusBar>
        <span>{saved}</span>
        <Spacer />
        <GrayButton $square aria-label="Zoom out"><Minus size={24} strokeWidth={4} /></GrayButton>
        <Zoom aria-label="Zoom" defaultValue={22} />
        <GrayButton $square aria-label="Zoom in"><Plus size={24} strokeWidth={4} /></GrayButton>
        <Percent>120 %</Percent>
      </StatusBar>
    </Window>
  );
}
